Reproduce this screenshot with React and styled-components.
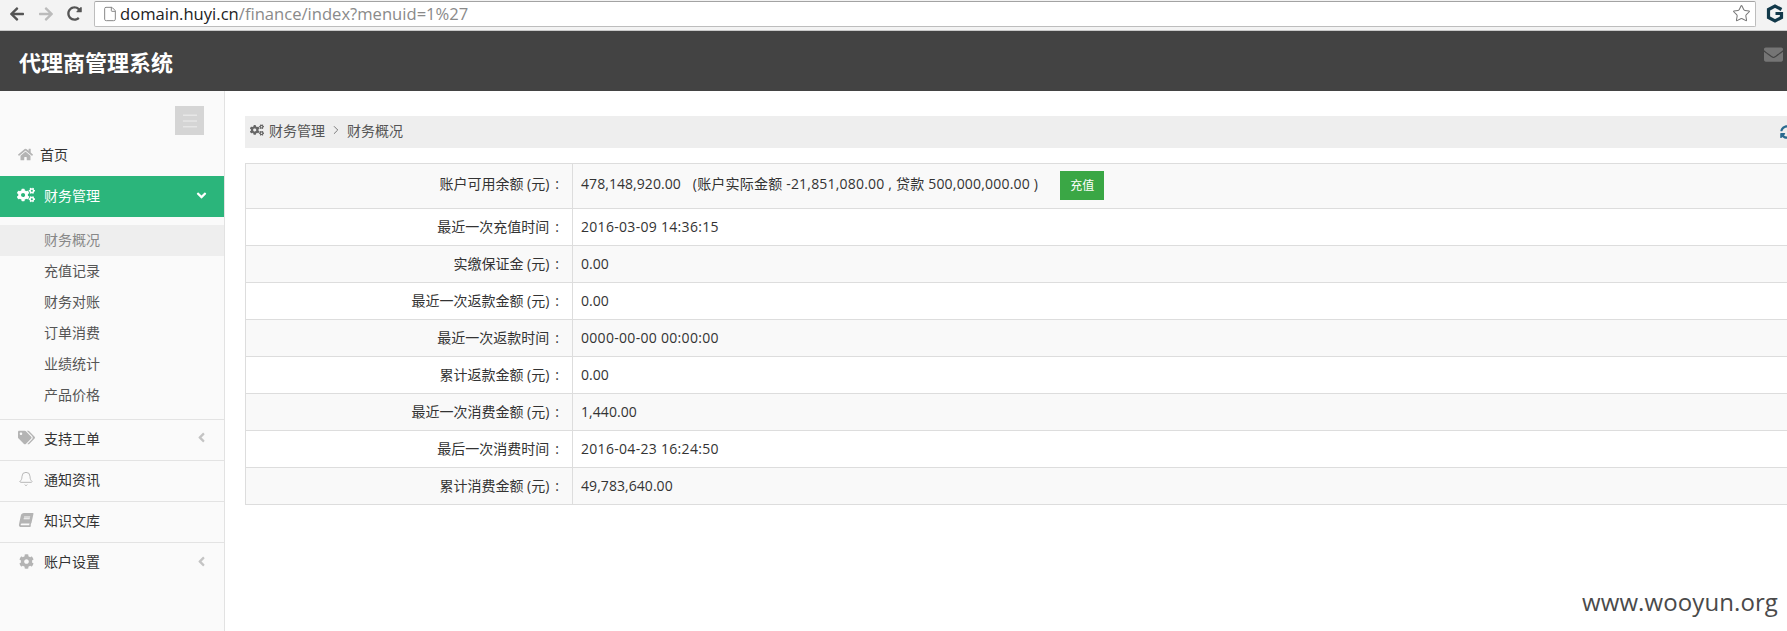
import React from "react";
import styled, { createGlobalStyle } from "styled-components";
import {
  FaHome,
  FaCogs,
  FaTags,
  FaBook,
  FaCog,
  FaEnvelope,
  FaAngleDown,
  FaAngleLeft,
  FaSyncAlt,
  FaArrowLeft,
  FaArrowRight,
  FaRedoAlt,
} from "react-icons/fa";
import { File, Star, Menu, Bell, ChevronRight } from "lucide-react";

const GlobalStyle = createGlobalStyle`
  html, body {
    margin: 0;
    padding: 0;
    height: 100%;
    background: #fff;
    overflow: hidden;
  }
  body {
    font-family: "Open Sans", "Noto Sans CJK SC", sans-serif;
    font-size: 14px;
    color: #333;
  }
`;

const Page = styled.div`
  position: relative;
  display: flex;
  flex-direction: column;
  height: 631px;
  overflow: hidden;
`;

const BrowserBar = styled.div`
  display: flex;
  align-items: center;
  height: 31px;
  flex: none;
  box-sizing: border-box;
  padding-bottom: 3px;
  background: #f3f3f3;
  border-bottom: 1px solid #c9c9c9;
`;
const NavIcons = styled.div`
  display: flex;
  align-items: center;
  gap: 13px;
  width: 94px;
  flex: none;
  box-sizing: border-box;
  padding-left: 9px;
`;
const AddressBox = styled.div`
  display: flex;
  align-items: center;
  width: 1662px;
  height: 26px;
  box-sizing: border-box;
  background: #fff;
  border: 1px solid #bdbdbd;
  border-top-color: #a3a3a3;
  border-radius: 2px;
  padding: 0 4px 0 7px;
`;
const Url = styled.div`
  flex: 1;
  margin-left: 2px;
  font-family: "Open Sans", sans-serif;
  font-size: 16.6px;
  line-height: 24px;
  color: #8a8a8a;
`;
const Host = styled.span`
  color: #222;
`;
const ExtIcon = styled.svg`
  margin-left: 10px;
  flex: none;
`;

const TopHeader = styled.header`
  display: flex;
  align-items: center;
  justify-content: space-between;
  height: 60px;
  flex: none;
  padding: 0 4px 0 19px;
  background: #434343;
`;
const Title = styled.div`
  font-size: 22px;
  font-weight: 700;
  color: #fff;
`;
const MailBtn = styled.div`
  display: flex;
  margin-bottom: 14px;
  color: #757575;
`;

const Body = styled.div`
  display: flex;
  flex: 1;
  min-height: 0;
`;

const Sidebar = styled.aside`
  width: 225px;
  flex: none;
  box-sizing: border-box;
  background: #fafafa;
  border-right: 1px solid #e2e2e2;
  padding-top: 15px;
`;
const ToggleRow = styled.div`
  display: flex;
  justify-content: flex-end;
  padding-right: 20px;
`;
const ToggleBtn = styled.div`
  display: flex;
  align-items: center;
  justify-content: center;
  width: 29px;
  height: 29px;
  background: #d5d5d5;
  color: #f4f4f4;
`;
const NavRow = styled.div`
  display: flex;
  align-items: center;
  box-sizing: border-box;
  height: 41px;
  padding: 0 15px ${(p) => (p.$low ? "5px" : "3px")} ${(p) => (p.$home ? "18px" : "17px")};
  background: ${(p) => (p.$active ? "#2bb57b" : "transparent")};
  color: ${(p) => (p.$active ? "#fff" : "#333")};
  border-bottom: ${(p) => (p.$line ? "1px solid #e3e3e3" : "none")};
`;
const NavIcon = styled.span`
  display: flex;
  justify-content: ${(p) => (p.$home ? "flex-start" : "center")};
  width: ${(p) => (p.$home ? "22px" : "18px")};
  margin-right: ${(p) => (p.$home ? "0" : "9px")};
  color: ${(p) => (p.$active ? "#fff" : "#b4b4b4")};
`;
const SlantedBook = styled(FaBook)`
  transform: skewX(-12deg);
`;
const NavLabel = styled.span`
  flex: 1;
`;
const Arrow = styled.span`
  display: flex;
  color: ${(p) => (p.$active ? "#fff" : "#c4c4c4")};
`;
const SubList = styled.div`
  padding: 8px 0;
  border-bottom: 1px solid #e3e3e3;
`;
const SubItem = styled.div`
  height: 31px;
  box-sizing: border-box;
  line-height: 29px;
  padding-left: 44px;
  color: ${(p) => (p.$current ? "#888" : "#555")};
  background: ${(p) => (p.$current ? "#eee" : "transparent")};
`;

const Main = styled.main`
  flex: 1;
  min-width: 0;
  overflow: hidden;
  padding: 25px 0 0 20px;
`;
const Breadcrumb = styled.div`
  display: flex;
  align-items: center;
  width: 1555px;
  height: 32px;
  box-sizing: border-box;
  padding: 0 6px 5px 5px;
  background: #eee;
  color: #555;
  margin-bottom: 15px;
`;
const CrumbIcon = styled.span`
  display: flex;
  margin-right: 5px;
  color: #666;
`;
const CrumbSep = styled.span`
  display: flex;
  margin: 0 4px;
  color: #555;
`;
const CrumbRefresh = styled.span`
  display: flex;
  margin: 5px 0 0 auto;
  color: #2a6a8f;
`;

const InfoTable = styled.table`
  width: 1562px;
  table-layout: fixed;
  border-collapse: collapse;
`;
const Row = styled.tr`
  height: ${(p) => (p.$tall ? "45px" : "37px")};
  background: ${(p) => (p.$striped ? "#f9f9f9" : "#fff")};
`;
const Label = styled.td`
  width: 327px;
  box-sizing: border-box;
  padding: 0 13px ${(p) => (p.$raised ? "6px" : "2px")} 0;
  text-align: right;
  border: 1px solid #ddd;
  color: #333;
`;
const Colon = styled.span`
  margin-left: 6px;
`;
const Value = styled.td`
  padding: 0 0 2px 8px;
  border: 1px solid #ddd;
  color: #333;
  letter-spacing: ${(p) => (p.$date ? "0.3px" : "0.06px")};
`;
const Extra = styled.span`
  margin-left: 12px;
  letter-spacing: 0.2px;
`;
const TopUp = styled.button`
  height: 29px;
  width: 44px;
  margin-left: 22px;
  padding: 0;
  border: none;
  background: #3aa745;
  color: #fff;
  font: inherit;
  font-size: 12px;
  vertical-align: middle;
`;

const Watermark = styled.div`
  position: absolute;
  right: 9px;
  bottom: 14px;
  font-family: "Open Sans", sans-serif;
  font-size: 24px;
  line-height: 30px;
  letter-spacing: 0.1px;
  color: #4a4a4a;
`;

const subItems = ["财务概况", "充值记录", "财务对账", "订单消费", "业绩统计", "产品价格"];

const rows = [
  ["最近一次充值时间", "2016-03-09 14:36:15", true],
  ["实缴保证金 (元)", "0.00"],
  ["最近一次返款金额 (元)", "0.00"],
  ["最近一次返款时间", "0000-00-00 00:00:00", true],
  ["累计返款金额 (元)", "0.00"],
  ["最近一次消费金额 (元)", "1,440.00"],
  ["最后一次消费时间", "2016-04-23 16:24:50", true],
  ["累计消费金额 (元)", "49,783,640.00"],
];

export default function App() {
  return (
    <Page>
      <GlobalStyle />
      <BrowserBar>
        <NavIcons>
          <FaArrowLeft size={16} color="#555" />
          <FaArrowRight size={16} color="#bbb" />
          <FaRedoAlt size={15} color="#555" />
        </NavIcons>
        <AddressBox>
          <File size={16} color="#888" strokeWidth={1.5} />
          <Url>
            <Host>domain.huyi.cn</Host>/finance/index?menuid=1%27
          </Url>
          <Star size={19} color="#777" strokeWidth={1.3} />
        </AddressBox>
        <ExtIcon width="18" height="19" viewBox="0 0 18 19">
          <path
            d="M15.5 5.5 L9 2 L2.5 5.5 V13.5 L9 17 L15.5 13.5 V9.5 H9.5"
            fill="none"
            stroke="#12394a"
            strokeWidth="3.2"
          />
        </ExtIcon>
      </BrowserBar>

      <TopHeader>
        <Title>代理商管理系统</Title>
        <MailBtn>
          <FaEnvelope size={19} />
        </MailBtn>
      </TopHeader>

      <Body>
        <Sidebar>
          <ToggleRow>
            <ToggleBtn>
              <Menu size={20} strokeWidth={1} />
            </ToggleBtn>
          </ToggleRow>
          <NavRow $home>
            <NavIcon $home>
              <FaHome size={15} />
            </NavIcon>
            <NavLabel>首页</NavLabel>
          </NavRow>
          <NavRow $active>
            <NavIcon $active>
              <FaCogs size={18} />
            </NavIcon>
            <NavLabel>财务管理</NavLabel>
            <Arrow $active>
              <FaAngleDown size={15} />
            </Arrow>
          </NavRow>
          <SubList>
            {subItems.map((item, i) => (
              <SubItem key={item} $current={i === 0}>
                {item}
              </SubItem>
            ))}
          </SubList>
          <NavRow $line $low>
            <NavIcon>
              <FaTags size={17} />
            </NavIcon>
            <NavLabel>支持工单</NavLabel>
            <Arrow>
              <FaAngleLeft size={15} />
            </Arrow>
          </NavRow>
          <NavRow $line $low>
            <NavIcon>
              <Bell size={16} strokeWidth={1.4} />
            </NavIcon>
            <NavLabel>通知资讯</NavLabel>
          </NavRow>
          <NavRow $line $low>
            <NavIcon>
              <SlantedBook size={14} />
            </NavIcon>
            <NavLabel>知识文库</NavLabel>
          </NavRow>
          <NavRow $low>
            <NavIcon>
              <FaCog size={15} />
            </NavIcon>
            <NavLabel>账户设置</NavLabel>
            <Arrow>
              <FaAngleLeft size={15} />
            </Arrow>
          </NavRow>
        </Sidebar>

        <Main>
          <Breadcrumb>
            <CrumbIcon>
              <FaCogs size={14} />
            </CrumbIcon>
            财务管理
            <CrumbSep>
              <ChevronRight size={14} strokeWidth={1.3} />
            </CrumbSep>
            财务概况
            <CrumbRefresh>
              <FaSyncAlt size={14} />
            </CrumbRefresh>
          </Breadcrumb>
          <InfoTable>
            <tbody>
              <Row $tall $striped>
                <Label $raised>
                  账户可用余额 (元)<Colon>:</Colon>
                </Label>
                <Value>
                  478,148,920.00
                  <Extra>(账户实际金额 -21,851,080.00 , 贷款 500,000,000.00 )</Extra>
                  <TopUp>充值</TopUp>
                </Value>
              </Row>
              {rows.map(([label, value, isDate], i) => (
                <Row key={label} $striped={i % 2 === 1}>
                  <Label>
                    {label}
                    <Colon>:</Colon>
                  </Label>
                  <Value $date={isDate}>{value}</Value>
                </Row>
              ))}
            </tbody>
          </InfoTable>
        </Main>
      </Body>
      <Watermark>www.wooyun.org</Watermark>
    </Page>
  );
}
